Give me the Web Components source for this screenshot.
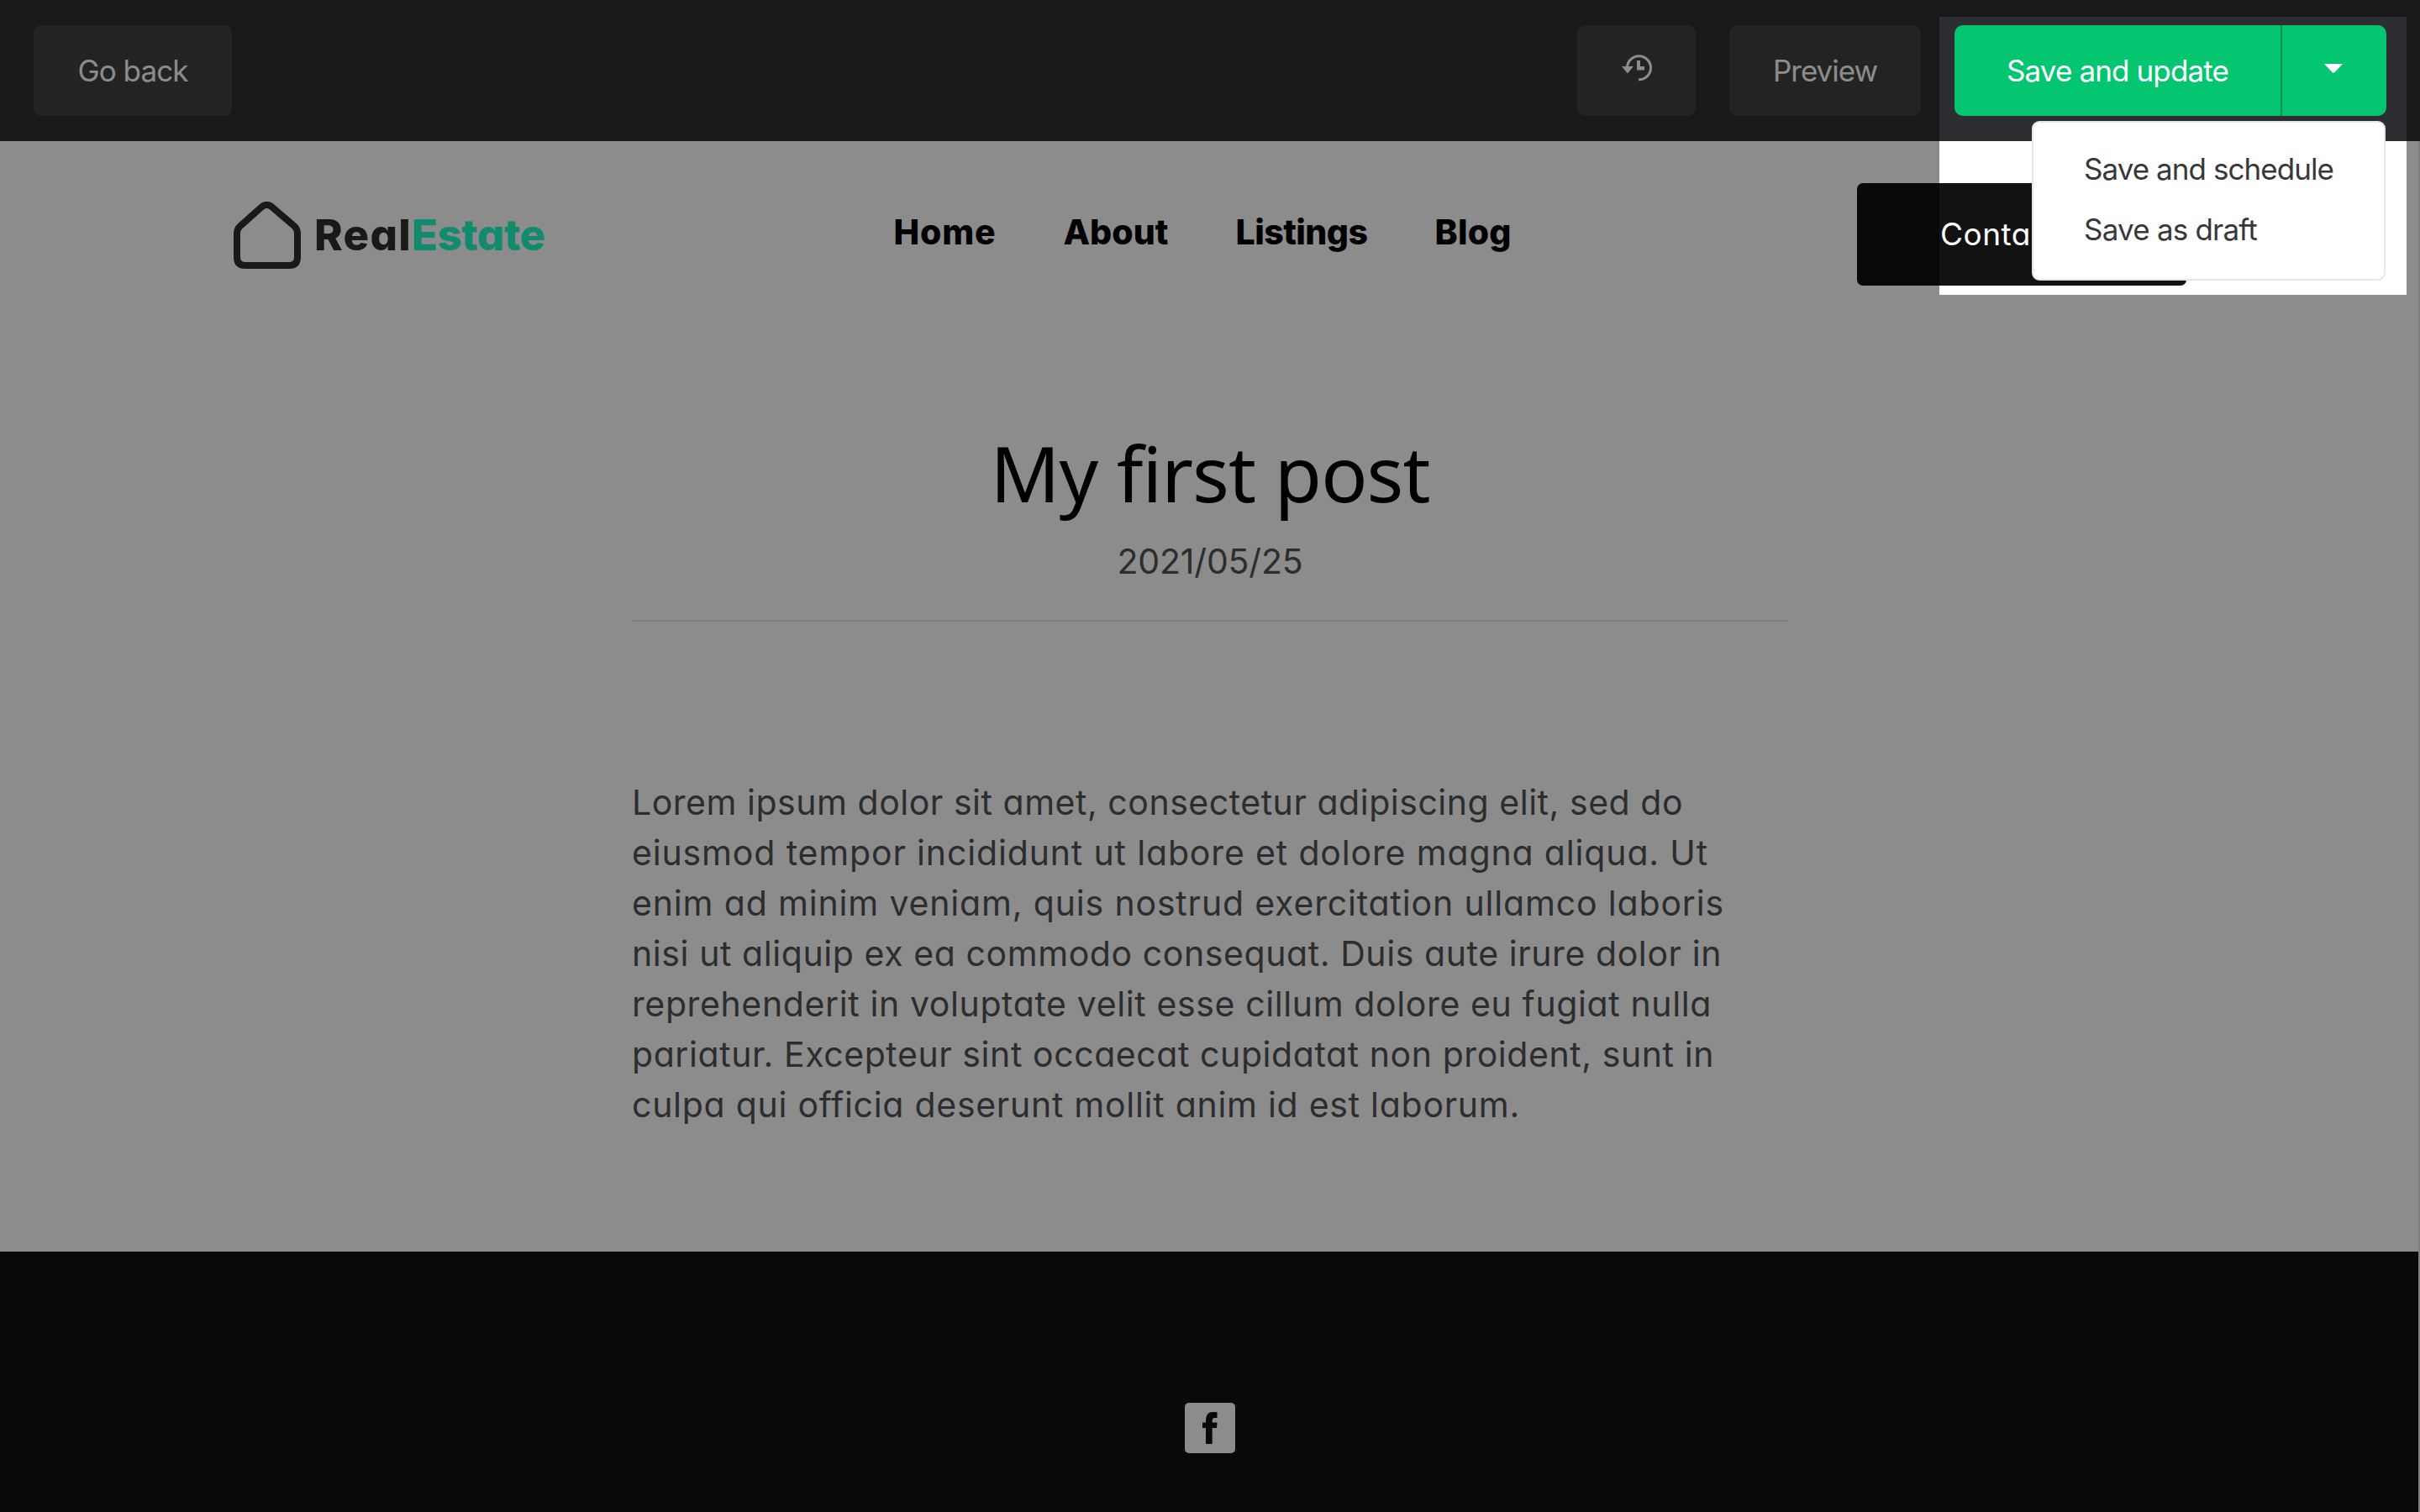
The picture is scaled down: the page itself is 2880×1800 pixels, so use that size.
<!DOCTYPE html>
<html lang="en">
<head>
<meta charset="utf-8">
<title>My first post</title>
<style>
  html, body { margin: 0; height: 100%; overflow: hidden; }
  body { font-family: Inter, "Liberation Sans", sans-serif; background: #fff; }
</style>
</head>
<body>
<post-editor></post-editor>

<script>
(() => {
  const define = (name, html, setup) => {
    const template = document.createElement('template');
    template.innerHTML = html;
    customElements.define(name, class extends HTMLElement {
      constructor() {
        super();
        this.attachShadow({ mode: 'open' });
        this.shadowRoot.appendChild(template.content.cloneNode(true));
      }
      connectedCallback() {
        if (setup) setup(this, this.shadowRoot);
      }
    });
  };

  define('post-editor', `
    <style>
      :host { display: flex; flex-direction: column; position: relative; width: 2880px; height: 1800px; overflow: hidden; }
      .page { flex: 1; display: flex; flex-direction: column; border-right: 2px solid #e6e6e6; }
      site-footer { flex: 1; }
    </style>
    <editor-toolbar></editor-toolbar>
    <div class="page">
      <site-header></site-header>
      <blog-post></blog-post>
      <site-footer></site-footer>
    </div>
    <spot-light></spot-light>
    <save-menu></save-menu>
  `);

  define('editor-toolbar', `
    <style>
      :host { display: flex; align-items: center; gap: 40px; box-sizing: border-box; height: 168px; padding: 0 40px; background: #2c2e32; color: #fff; }
      .space { flex: 1; }
      svg { display: block; margin-bottom: 7px; }
    </style>
    <tool-button style="width:236px"><fit-text width="131">Go back</fit-text></tool-button>
    <div class="space"></div>
    <tool-button style="width:141px">
      <svg width="36" height="32" viewBox="0 0 36 32">
        <path d="M6.5 15A14 14 0 1 1 20 29.8" fill="none" stroke="#fff" stroke-width="3"/>
        <path d="M0 14h14l-7 8.5z" fill="#fff"/>
        <path d="M18 7h4v7h5v4.500h-9z" fill="#fff"/>
      </svg>
    </tool-button>
    <tool-button style="width:228px"><fit-text width="124">Preview</fit-text></tool-button>
    <save-button></save-button>
  `);

  define('tool-button', `
    <style>
      :host { display: flex; align-items: center; justify-content: center; height: 108px; border-radius: 9px; background: #414141; font-size: 35px; line-height: 44px; }
    </style>
    <slot></slot>
  `);

  define('save-button', `
    <style>
      :host { display: flex; width: 514px; height: 108px; border-radius: 10px; overflow: hidden; background: #04c570; font-size: 35px; line-height: 44px; }
      .main { flex: 1; display: flex; align-items: center; justify-content: center; border-right: 2px solid #078f54; }
      .more { width: 124px; display: flex; align-items: center; justify-content: center; }
      svg { display: block; margin: 0 2px 6px 0; }
    </style>
    <div class="main"><fit-text width="264">Save and update</fit-text></div>
    <div class="more"><svg width="22" height="11" viewBox="0 0 22 11"><path d="M0 0h22L12.500 10q-1.500 1.300-3 0z" fill="#fff"/></svg></div>
  `);

  define('save-menu', `
    <style>
      :host { position: absolute; left: 2418px; top: 144px; box-sizing: border-box; width: 421px; height: 190px; padding: 19px 0 0 60px; border: 2px solid #e4e6ea; border-radius: 9px; background: #fff; color: #383838; font-size: 35px; }
      div { height: 72px; line-height: 72px; }
    </style>
    <div><fit-text width="297">Save and schedule</fit-text></div>
    <div><fit-text width="206">Save as draft</fit-text></div>
  `);

  // Dims everything around the save controls
  define('spot-light', `
    <style>
      :host { position: absolute; left: 2308px; top: 20px; width: 556px; height: 331px; box-shadow: 0 0 0 3000px rgba(0, 0, 0, .45); }
    </style>
  `);

  define('site-header', `
    <style>
      :host { display: flex; align-items: center; justify-content: space-between; box-sizing: border-box; height: 172px; padding: 50px 276px 0 278px; }
      nav { display: flex; gap: 80px; margin-bottom: 7px; font-size: 41px; line-height: 60px; font-weight: 800; color: #000; font-feature-settings: "cv11"; }
      .contact { display: flex; align-items: center; box-sizing: border-box; width: 392px; height: 122px; padding-left: 99px; border-radius: 7px; background: #121212; color: #fff; font-size: 37px; line-height: 50px; font-feature-settings: "cv11"; }
    </style>
    <site-logo></site-logo>
    <nav>
      <fit-text width="122">Home</fit-text>
      <fit-text width="125">About</fit-text>
      <fit-text width="157">Listings</fit-text>
      <fit-text width="91">Blog</fit-text>
    </nav>
    <div class="contact"><fit-text width="108">Conta</fit-text></div>
  `);

  define('site-logo', `
    <style>
      :host { display: flex; align-items: center; width: 374px; height: 80px; margin-top: 2px; color: #2f2f2f; font-size: 51px; line-height: 80px; font-weight: 800; font-feature-settings: "cv11"; }
      svg { margin-right: 16px; }
      .green { color: #20fbc6; }
    </style>
    <svg width="80" height="80" viewBox="0 0 80 80">
      <path d="M33.500 6.300Q39.500 1.500 45.500 6.300L72 29Q76 32.500 76 38V66Q76 76 66 76H14Q4 76 4 66V38Q4 32.500 8 29Z" fill="none" stroke="#2f2f2f" stroke-width="8"/>
    </svg>
    <fit-text width="116">Real</fit-text><fit-text class="green" width="159">Estate</fit-text>
  `);

  define('blog-post', `
    <style>
      :host { display: flex; flex-direction: column; align-items: center; box-sizing: border-box; width: 1376px; height: 1150px; margin-left: 752px; padding-top: 163px; color: #505354; font-feature-settings: "cv11"; }
      h1 { margin: 0; font: 400 91.500px/120px "Noto Sans", sans-serif; color: #000; }
      time { margin-top: 15px; font-size: 41px; line-height: 60px; }
      hr { width: 100%; height: 2px; margin: 40px 0 185px; border: 0; background: #e6e6e6; }
      .body { align-self: stretch; display: flex; flex-direction: column; font-size: 41px; line-height: 60px; }
    </style>
    <h1><fit-text width="523">My first post</fit-text></h1>
    <time><fit-text width="221">2021/05/25</fit-text></time>
    <hr>
    <div class="body">
      <fit-text width="1251">Lorem ipsum dolor sit amet, consectetur adipiscing elit, sed do</fit-text>
      <fit-text width="1281">eiusmod tempor incididunt ut labore et dolore magna aliqua. Ut</fit-text>
      <fit-text width="1300">enim ad minim veniam, quis nostrud exercitation ullamco laboris</fit-text>
      <fit-text width="1297">nisi ut aliquip ex ea commodo consequat. Duis aute irure dolor in</fit-text>
      <fit-text width="1285">reprehenderit in voluptate velit esse cillum dolore eu fugiat nulla</fit-text>
      <fit-text width="1288">pariatur. Excepteur sint occaecat cupidatat non proident, sunt in</fit-text>
      <fit-text width="1057">culpa qui officia deserunt mollit anim id est laborum.</fit-text>
    </div>
  `);

  define('site-footer', `
    <style>
      :host { display: flex; justify-content: center; box-sizing: border-box; padding: 180px 0 0 2px; background: #121212; }
    </style>
    <svg width="60" height="60" viewBox="0 0 60 60">
      <rect width="60" height="60" rx="5" fill="#fff"/>
      <path d="M25 49V30H21V23.500H25V20.500Q25 11 33 11H38.500V18H35Q32.700 18 32.700 20.500V23.500H38.500L38 30H32.700V49Z" fill="#121212"/>
    </svg>
  `);

  // Tracks its text so that the line takes the given width
  define('fit-text', `
    <style>
      :host { display: block; white-space: nowrap; }
      span { display: inline-block; }
    </style>
    <span><slot></slot></span>
  `, (host, root) => {
    const span = root.querySelector('span');
    const width = Number(host.getAttribute('width'));
    const count = host.textContent.length;
    span.style.letterSpacing = '0px';
    span.style.letterSpacing = (width - span.getBoundingClientRect().width) / count + 'px';
  });
})();
</script>
</body>
</html>
